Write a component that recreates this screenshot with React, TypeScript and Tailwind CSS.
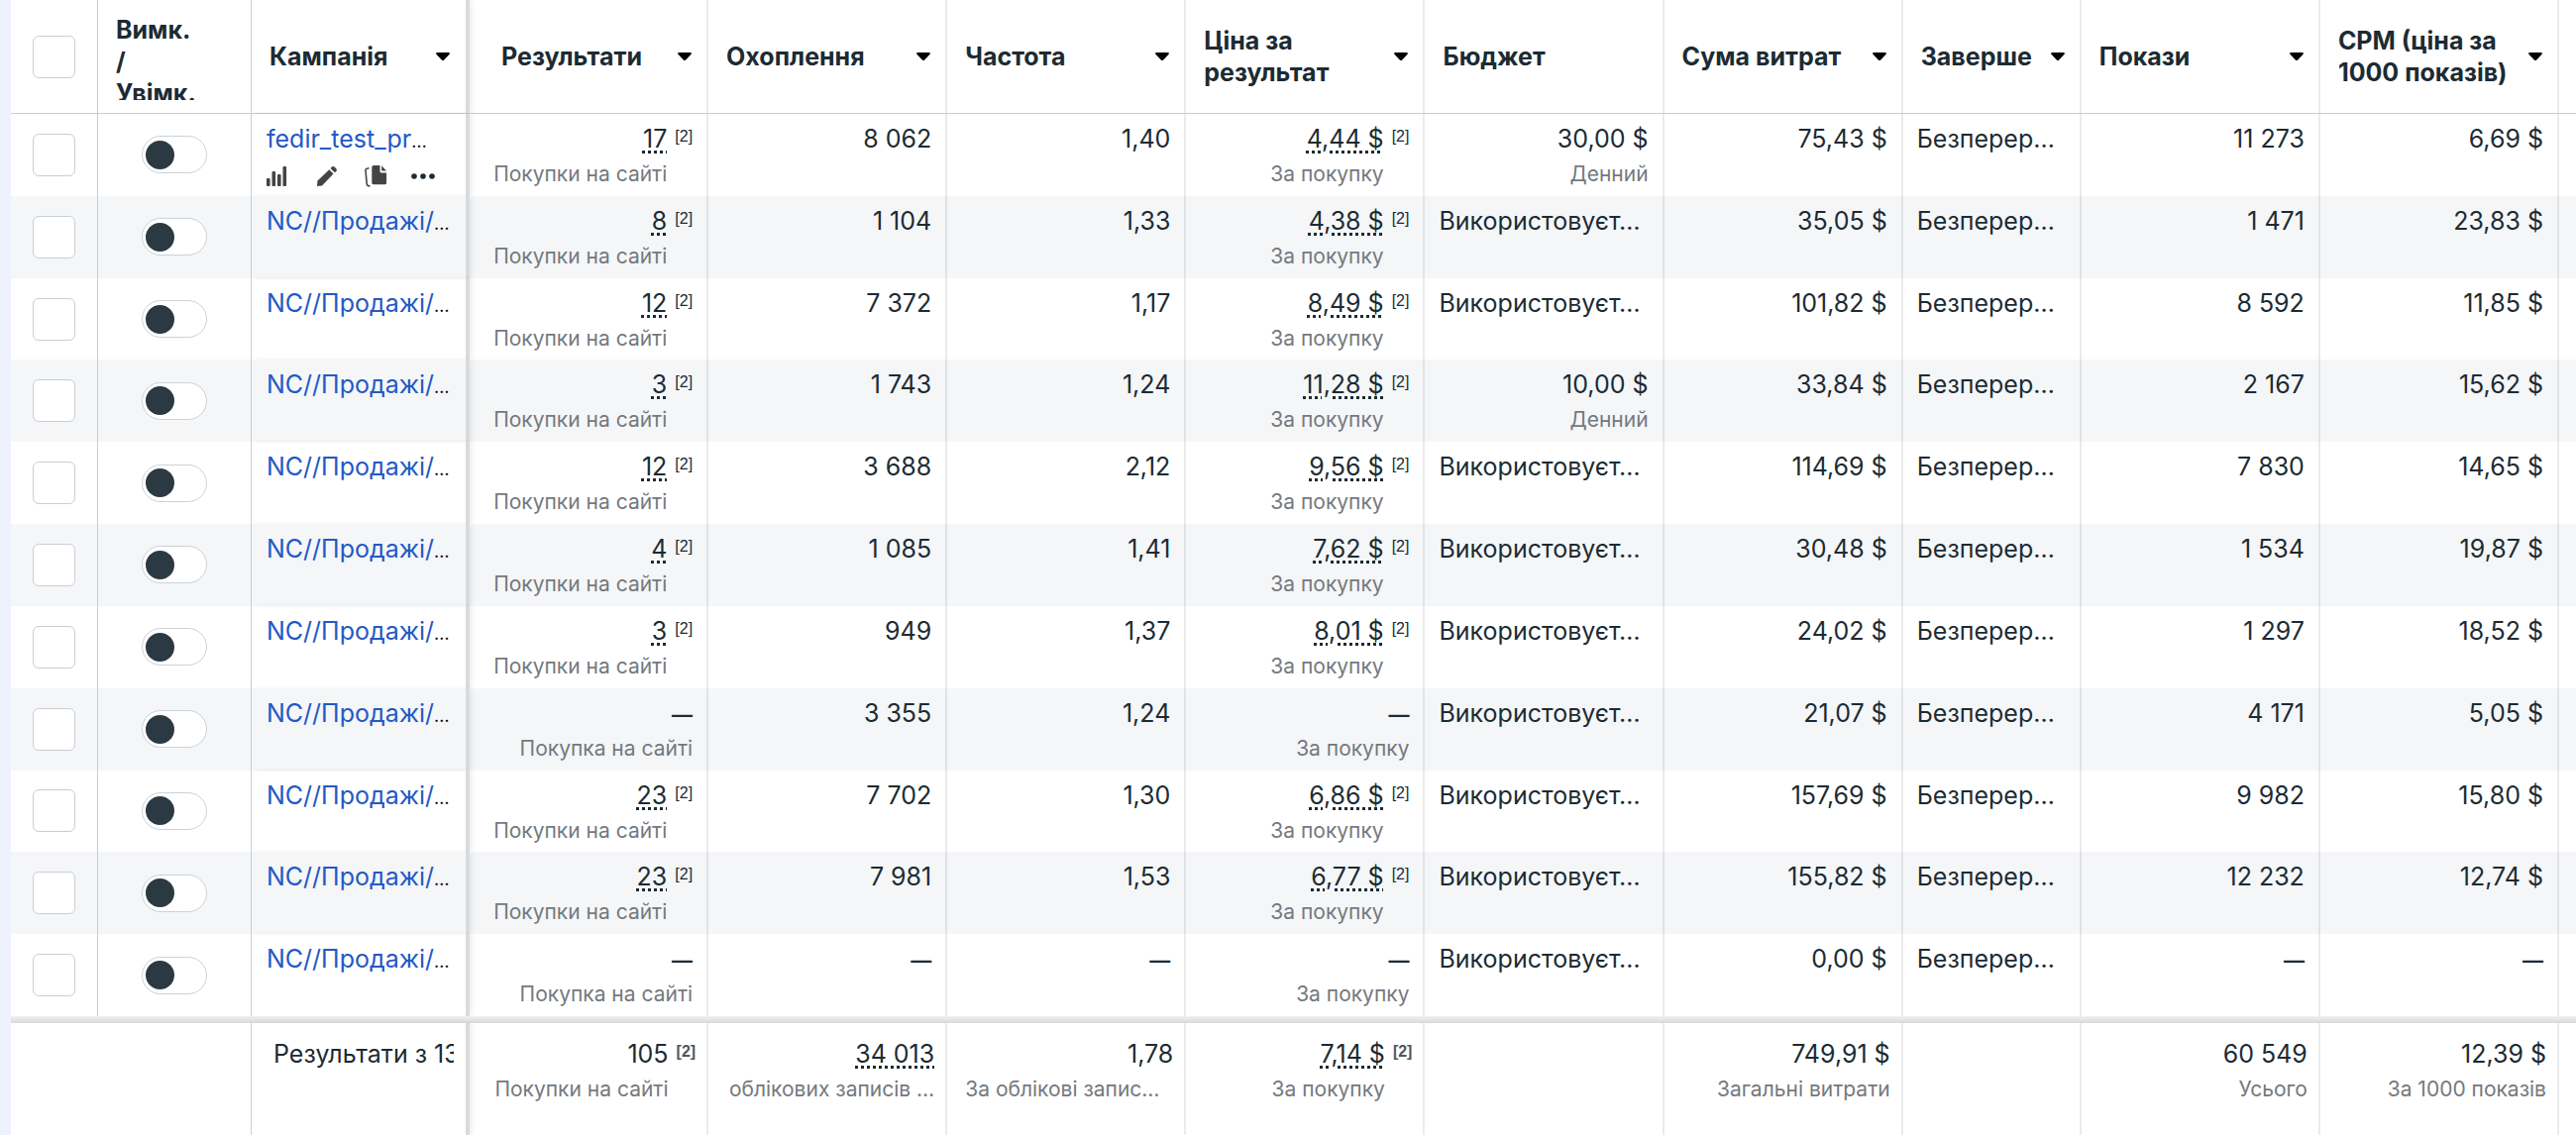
import React from "react";

type Row = {
  name: string;
  tools?: boolean;
  results: string;
  reach: string;
  freq: string;
  cost: string;
  budget?: string;
  spent: string;
  shows: string;
  cpm: string;
};

const NC = "NC//Продажі/";

const rows: Row[] = [
  { name: "fedir_test_pr", tools: true, results: "17", reach: "8 062", freq: "1,40", cost: "4,44 $", budget: "30,00 $", spent: "75,43 $", shows: "11 273", cpm: "6,69 $" },
  { name: NC, results: "8", reach: "1 104", freq: "1,33", cost: "4,38 $", spent: "35,05 $", shows: "1 471", cpm: "23,83 $" },
  { name: NC, results: "12", reach: "7 372", freq: "1,17", cost: "8,49 $", spent: "101,82 $", shows: "8 592", cpm: "11,85 $" },
  { name: NC, results: "3", reach: "1 743", freq: "1,24", cost: "11,28 $", budget: "10,00 $", spent: "33,84 $", shows: "2 167", cpm: "15,62 $" },
  { name: NC, results: "12", reach: "3 688", freq: "2,12", cost: "9,56 $", spent: "114,69 $", shows: "7 830", cpm: "14,65 $" },
  { name: NC, results: "4", reach: "1 085", freq: "1,41", cost: "7,62 $", spent: "30,48 $", shows: "1 534", cpm: "19,87 $" },
  { name: NC, results: "3", reach: "949", freq: "1,37", cost: "8,01 $", spent: "24,02 $", shows: "1 297", cpm: "18,52 $" },
  { name: NC, results: "", reach: "3 355", freq: "1,24", cost: "", spent: "21,07 $", shows: "4 171", cpm: "5,05 $" },
  { name: NC, results: "23", reach: "7 702", freq: "1,30", cost: "6,86 $", spent: "157,69 $", shows: "9 982", cpm: "15,80 $" },
  { name: NC, results: "23", reach: "7 981", freq: "1,53", cost: "6,77 $", spent: "155,82 $", shows: "12 232", cpm: "12,74 $" },
  { name: NC, results: "", reach: "", freq: "", cost: "", spent: "0,00 $", shows: "", cpm: "" },
];

const GRID =
  "grid grid-cols-[88px_155px_220px_repeat(6,minmax(0,241fr))_minmax(0,180fr)_repeat(2,minmax(0,241fr))_17px]";
const LINE = "border-r-2 border-black/8";
const DARK_LINE = "border-r border-[#c9cdd2]";
const FROZEN_LINE = "border-r-4 border-[#dadbdd] shadow-[3px_0_4px_rgba(0,0,0,0.06)]";

function Caret() {
  return (
    <svg width="16" height="10" viewBox="0 0 16 10" className="shrink-0" aria-hidden="true">
      <path d="M2.2 1h11.6c1 0 1.4 1 .8 1.7L9.2 8.500c-.7.7-1.700.7-2.400 0L1.400 2.700C.8 2 1.200 1 2.200 1z" fill="#000" />
    </svg>
  );
}

function Head({ label, sort = true, line = LINE, pad = "pl-[18px] pr-[14px]" }: { label: string; sort?: boolean; line?: string; pad?: string }) {
  return (
    <th scope="col" className={`flex items-center justify-between gap-2 text-left font-bold ${pad} ${line}`}>
      <span className="min-w-0">{label}</span>
      {sort && (
        <button type="button" aria-label={`Сортувати: ${label}`} className="flex h-8 items-center">
          <Caret />
        </button>
      )}
    </th>
  );
}

function Check({ label }: { label: string }) {
  return (
    <input
      type="checkbox"
      aria-label={label}
      className="h-[43px] w-[43px] appearance-none rounded-md border border-[#c9ced6] bg-white"
    />
  );
}

function Toggle({ label }: { label: string }) {
  return (
    <button
      type="button"
      role="switch"
      aria-checked="false"
      aria-label={label}
      className="flex h-[38px] w-[66px] items-center rounded-full border border-[#cbd2d9] bg-white pl-[3px]"
    >
      <span className="h-[29px] w-[29px] rounded-full bg-[#2b3943]" />
    </button>
  );
}

function Tools() {
  return (
    <div className="mt-3 flex h-6 items-center gap-6 text-[#444]">
      <button type="button" aria-label="Діаграми">
        <svg width="24" height="22" viewBox="0 0 24 22" fill="currentColor">
          <rect x="0" y="13" width="3.600" height="8" rx="1" />
          <rect x="5.500" y="6" width="3.600" height="15" rx="1" />
          <rect x="11" y="9" width="3.600" height="12" rx="1" />
          <rect x="16.500" y="1" width="3.600" height="20" rx="1" />
        </svg>
      </button>
      <button type="button" aria-label="Редагувати">
        <svg width="26" height="22" viewBox="0 0 26 22" fill="currentColor">
          <path d="M3 21l.5-5.500L15.300 4.200l4.200 4.200L8 20.500z" />
          <path d="M16.600 2.900l1.200-1.300c.8-.8 2-.8 2.800 0l1.700 1.600c.8.800.8 2 0 2.800l-1.400 1.200z" />
        </svg>
      </button>
      <button type="button" aria-label="Дублювати">
        <svg width="24" height="24" viewBox="0 0 24 24" fill="currentColor">
          <path d="M10.500 1h6v5.800c0 1 .6 1.600 1.600 1.600h5V18.500c0 1-.7 1.700-1.700 1.700H10c-1 0-1.700-.7-1.700-1.700V3.200C8.300 1.800 9.100 1 10.500 1z" />
          <path d="M18.200 1.200L23 6.600h-4.800z" />
          <path d="M5.500 3.800L3.500 4.200c-1.200.2-1.700.9-1.500 2L3.200 19.500c.2 1.800 1 2.500 3.300 2.500" fill="none" stroke="currentColor" strokeWidth="1.600" />
        </svg>
      </button>
      <button type="button" aria-label="Більше" className="text-[#1c2b33]">
        <svg width="24" height="8" viewBox="0 0 24 8" fill="currentColor">
          <circle cx="3" cy="4" r="2.800" />
          <circle cx="12" cy="4" r="2.800" />
          <circle cx="21" cy="4" r="2.800" />
        </svg>
      </button>
    </div>
  );
}

function Value({
  value,
  note,
  mark,
  dotted,
  foot,
  noteStart,
}: {
  value: string;
  note?: string;
  mark?: boolean;
  dotted?: boolean;
  foot?: boolean;
  noteStart?: boolean;
}) {
  const pad = foot ? "pt-[17px] pl-2 pr-[11px]" : "pt-[11px] px-[14px]";
  return (
    <td className={`min-w-0 text-right ${pad} ${LINE}`}>
      <div className="flex justify-end gap-2">
        <div className="min-w-0 grow">
          <div className="h-7 leading-7">
            {value ? (
              <span className={dotted ? "underline decoration-dotted decoration-3 underline-offset-3" : ""}>
                {value}
              </span>
            ) : (
              <span className="text-[21px] font-semibold">—</span>
            )}
          </div>
          {note && (
            <div className={`mt-2 truncate text-[21px] leading-7 text-[#75797e] ${noteStart ? "pl-[10px] text-left" : ""}`}>
              {note}
            </div>
          )}
        </div>
        {mark && (
          <span className={`font-['Liberation_Sans',sans-serif] text-base leading-6 ${foot ? "font-bold text-[#50565c]" : ""}`}>
            [2]
          </span>
        )}
      </div>
    </td>
  );
}

function TextCell({ text }: { text: string }) {
  return <td className={`min-w-0 px-[14px] pt-[11px] leading-7 whitespace-nowrap ${LINE}`}>{text}</td>;
}

export default function App() {
  return (
    <div className="flex min-h-screen bg-white font-[Inter,sans-serif] text-[25px] text-[#1c2b33]">
      <div className="w-[11px] shrink-0 bg-[#edf2fc]" />
      <table className="grid min-w-0 grow grid-rows-[auto_1fr_auto]">
        <thead className="block border-b border-[#ccc]">
          <tr className={`h-[114px] leading-8 ${GRID}`}>
            <th className={`flex items-center pl-[22px] ${DARK_LINE}`}>
              <Check label="Вибрати всі" />
            </th>
            <th scope="col" className={`pt-[14px] pl-[18px] text-left font-bold ${DARK_LINE}`}>
              <div className="h-[87px] w-[90px] overflow-hidden">Вимк. / Увімк.</div>
            </th>
            <Head label="Кампанія" line={FROZEN_LINE} pad="pl-[18px] pr-[15px]" />
            <Head label="Результати" pad="pl-8 pr-[14px]" />
            <Head label="Охоплення" />
            <Head label="Частота" />
            <Head label="Ціна за результат" />
            <Head label="Бюджет" sort={false} />
            <Head label="Сума витрат" />
            <Head label="Заверше" />
            <Head label="Покази" />
            <Head label="CPM (ціна за 1000 показів)" />
            <th />
          </tr>
        </thead>
        <tbody className="grid auto-rows-fr">
          {rows.map((r, i) => (
            <tr key={i} className={`${GRID} even:bg-[#f4f6f8]`}>
              <td className={`flex items-center pl-[22px] ${DARK_LINE}`}>
                <Check label={`Вибрати ${r.name} ${i + 1}`} />
              </td>
              <td className={`flex items-center justify-center ${DARK_LINE}`}>
                <Toggle label={`Увімкнути ${r.name} ${i + 1}`} />
              </td>
              <td className={`pt-[11px] pl-[15px] ${FROZEN_LINE}`}>
                <div className="h-7 leading-7 whitespace-nowrap">
                  <a href="#campaign" className="text-[#2459c4]">{r.name}</a>
                  <span className="text-[18px] text-black">…</span>
                </div>
                {r.tools && <Tools />}
              </td>
              <Value value={r.results} note={r.results ? "Покупки на сайті" : "Покупка на сайті"} mark={!!r.results} dotted={!!r.results} />
              <Value value={r.reach} />
              <Value value={r.freq} />
              <Value value={r.cost} note="За покупку" mark={!!r.cost} dotted={!!r.cost} />
              {r.budget ? <Value value={r.budget} note="Денний" /> : <TextCell text="Використовуєт…" />}
              <Value value={r.spent} />
              <TextCell text="Безперер…" />
              <Value value={r.shows} />
              <Value value={r.cpm} />
              <td />
            </tr>
          ))}
        </tbody>
        <tfoot className="block">
          <tr className="block h-[7px] bg-linear-to-b from-[#f0f0f1] to-[#d9d9db]"><td /></tr>
          <tr className={`h-[113px] ${GRID}`}>
            <td className="col-span-2 border-r border-[#c9cdd2]" />
            <td className={`pt-[17px] pr-3 pl-[22px] ${FROZEN_LINE}`}>
              <div className="overflow-hidden leading-7 whitespace-nowrap">Результати з 13</div>
            </td>
            <Value foot value="105" note="Покупки на сайті" mark />
            <Value foot value="34 013" note="облікових записів …" dotted />
            <Value foot value="1,78" note="За облікові запис…" noteStart />
            <Value foot value="7,14 $" note="За покупку" mark dotted />
            <td className={LINE} />
            <Value foot value="749,91 $" note="Загальні витрати" />
            <td className={LINE} />
            <Value foot value="60 549" note="Усього" />
            <Value foot value="12,39 $" note="За 1000 показів" />
            <td />
          </tr>
        </tfoot>
      </table>
    </div>
  );
}
